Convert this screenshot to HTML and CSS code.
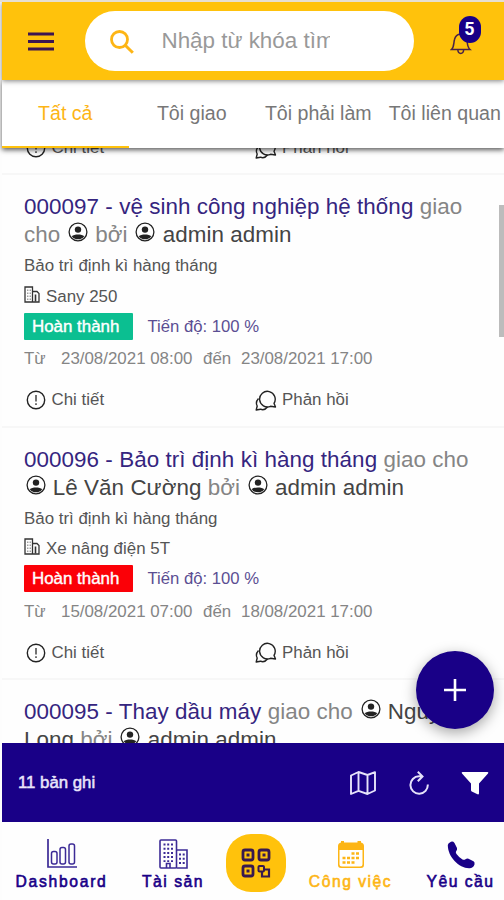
FILE: index.html
```html
<!DOCTYPE html>
<html lang="vi">
<head>
<meta charset="utf-8">
<title>Công việc</title>
<link rel="stylesheet" href="styles.css">
</head>
<body>
<svg class="defs" width="0" height="0">
  <symbol id="user" viewBox="0 0 20 20"><circle cx="10" cy="10" r="8.9" fill="none" stroke="#222" stroke-width="1.3"/><circle cx="10" cy="7.6" r="3.2" fill="#222"/><path d="M3.8 14.2C6 11.8 14 11.8 16.2 14.2C13.8 18.4 6.2 18.4 3.8 14.2Z" fill="#222"/></symbol>
  <symbol id="info" viewBox="0 0 20 20"><circle cx="10" cy="10" r="8.7" fill="none" stroke="#222" stroke-width="1.4"/><path d="M10 5v6.500M10 13.200v1.800" stroke="#444" stroke-width="1.500"/></symbol>
  <symbol id="chat" viewBox="0 0 22 21"><g fill="none" stroke="#222" stroke-width="1.4" stroke-linejoin="round"><path d="M19 13.300A7.800 7.800 0 1 0 15.500 16.300L20.500 17Z"/><path d="M3.500 8.500C1.200 11 .800 13.500 2.200 16L1.200 20L5.500 19.200C8 20.300 10.500 19.500 12.500 17"/></g></symbol>
  <symbol id="asset" viewBox="0 0 16 17"><path d="M1 16V1h7.5v15zM8.5 5.500h4.500l2 2V16H1" fill="none" stroke="#333" stroke-width="1.300"/><path d="M3.800 3.500v11M6.200 3.500v11" stroke="#777" stroke-width="1" stroke-dasharray="1.500 1.500"/><path d="M11.500 8.500v7" stroke="#333" stroke-width="1.600"/></symbol>
</svg>
<div class="app">
  <header class="header">
    <svg class="menu" viewBox="0 0 26 20"><path d="M0 2h26M0 9.5h26M0 17h26" stroke="#3d1550" stroke-width="3"/></svg>
    <div class="search">
      <svg class="lens" viewBox="0 0 24 24"><circle cx="9.500" cy="9.500" r="8" fill="none" stroke="#fdb515" stroke-width="2.800"/><path d="M15 15l7.800 7.800" stroke="#fdb515" stroke-width="3"/></svg>
      <span class="placeholder">Nhập từ khóa tìm</span>
    </div>
    <div class="bell">
      <svg viewBox="0 0 22 26"><path d="M1.500 20.500C4.200 18 3.500 14 4.500 10.500C5.300 7 7.800 5.200 10.500 5.200S16 7 16.800 10.500C17.600 14 17 18 20 20.500ZM7.800 20.800C8.200 25.700 13.300 25.700 13.700 20.800" fill="none" stroke="#4a2247" stroke-width="1.500"/></svg>
      <span class="count">5</span>
    </div>
  </header>
  <nav class="tabs">
    <span class="tab active">Tất cả</span>
    <span class="tab">Tôi giao</span>
    <span class="tab">Tôi phải làm</span>
    <span class="tab">Tôi liên quan</span>
  </nav>
  <main class="list">
    <article class="item cut">
      <div class="actions"><span class="action"><svg class="i-info"><use href="#info"/></svg>Chi tiết</span><span class="action"><svg class="i-chat"><use href="#chat"/></svg>Phản hồi</span></div>
    </article>
    <article class="item">
      <h2 class="title"><b>000097 - vệ sinh công nghiệp hệ thống</b> giao<br>cho <svg class="i-user"><use href="#user"/></svg> bởi <svg class="i-user"><use href="#user"/></svg> <i>admin admin</i></h2>
      <p class="desc">Bảo trì định kì hàng tháng</p>
      <p class="asset"><svg class="i-asset"><use href="#asset"/></svg>Sany 250</p>
      <div class="status"><span class="badge green">Hoàn thành</span><span class="progress">Tiến độ: 100 %</span></div>
      <p class="dates"><span class="from">Từ</span><span class="when">23/08/2021 08:00</span><span class="to">đến</span><span>23/08/2021 17:00</span></p>
      <div class="actions"><span class="action"><svg class="i-info"><use href="#info"/></svg>Chi tiết</span><span class="action"><svg class="i-chat"><use href="#chat"/></svg>Phản hồi</span></div>
    </article>
    <article class="item">
      <h2 class="title"><b>000096 - Bảo trì định kì hàng tháng</b> giao cho<br><svg class="i-user"><use href="#user"/></svg> <i>Lê Văn Cường</i> bởi <svg class="i-user"><use href="#user"/></svg> <i>admin admin</i></h2>
      <p class="desc">Bảo trì định kì hàng tháng</p>
      <p class="asset"><svg class="i-asset"><use href="#asset"/></svg>Xe nâng điện 5T</p>
      <div class="status"><span class="badge red">Hoàn thành</span><span class="progress">Tiến độ: 100 %</span></div>
      <p class="dates"><span class="from">Từ</span><span class="when">15/08/2021 07:00</span><span class="to">đến</span><span>18/08/2021 17:00</span></p>
      <div class="actions"><span class="action"><svg class="i-info"><use href="#info"/></svg>Chi tiết</span><span class="action"><svg class="i-chat"><use href="#chat"/></svg>Phản hồi</span></div>
    </article>
    <article class="item">
      <h2 class="title"><b>000095 - Thay dầu máy</b> giao cho <svg class="i-user"><use href="#user"/></svg> <i>Nguyễn</i><br><i>Long</i> bởi <svg class="i-user"><use href="#user"/></svg> <i>admin admin</i></h2>
    </article>
    <div class="thumb"></div>
  </main>
  <div class="fab"><svg viewBox="0 0 22 22"><path d="M11 0v22M0 11h22" stroke="#fff" stroke-width="2.600"/></svg></div>
  <section class="bar">
    <span class="total">11 bản ghi</span>
    <svg class="i-map" viewBox="0 0 26 24"><path d="M1 4.500L8.500 1L17.500 4L25 1.200V19.500L17.500 23L8.500 19.800L1 23ZM8.500 1V19.800M17.500 4V23" fill="none" stroke="#e6e2fa" stroke-width="1.900" stroke-linejoin="round"/></svg>
    <svg class="i-reload" viewBox="0 0 20 24"><path d="M18.800 13.500A8.700 8.700 0 1 1 10 5.300H13.300M8.800 .800L13.500 5.400L8.800 10.200" fill="none" stroke="#e6e2fa" stroke-width="2"/></svg>
    <svg class="i-filter" viewBox="0 0 28 24"><path d="M1.500 1H26.500Q28 1 27 2.500L18 12.500V22.500Q17.500 24 16 23L10.800 20.500Q10 20 10 19V12.500L1 2.500Q0 1 1.500 1Z" fill="#fff"/></svg>
  </section>
  <footer class="nav">
    <div class="nav-item n1"><svg width="30" height="30" viewBox="0 0 30 30"><g fill="none" stroke="#3c2b96" stroke-width="1.500"><path d="M1 0V28H30" stroke-width="1.700"/><rect x="4.500" y="12.500" width="5.500" height="12.500" rx="2"/><rect x="13" y="8.500" width="5.500" height="16.500" rx="2"/><rect x="22" y="5" width="5.500" height="20" rx="2"/></g></svg><span>Dashboard</span></div>
    <div class="nav-item n2"><svg width="29" height="30" viewBox="0 0 29 30"><g fill="none" stroke="#3c2b96" stroke-width="1.600"><rect x="1" y="1" width="16.500" height="28" rx="1"/><path d="M17.500 11H28V29H17.500M7.500 29V24.500H11V29"/><path d="M5.500 4.500V23M9.200 4.500V23M13 4.500V23M21 14.500V27M24.700 14.500V27" stroke-dasharray="2 2.200" stroke-width="2"/></g></svg><span>Tài sản</span></div>
    <div class="qr"><svg width="30" height="30" viewBox="0 0 30 30"><g fill="none" stroke="#38194f" stroke-width="2.800"><rect x="2" y="2" width="10" height="10" rx="2"/><rect x="18" y="2" width="10" height="10" rx="2"/><rect x="2" y="18" width="10" height="10" rx="2"/><rect x="17.500" y="18" width="5.500" height="5.500" rx="1" stroke-width="2"/><path d="M23 21.500H28V28.500H21V23.500" stroke-width="2.200"/></g><path d="M5.500 5.500h3v3h-3zM21.500 5.500h3v3h-3zM5.500 21.500h3v3h-3z" fill="#38194f"/></svg></div>
    <div class="nav-item n3"><svg width="28" height="28" viewBox="0 0 28 28"><path d="M4 1.500V0H7V1.500H20.500V0H24V1.500Q27 2 27 5V24Q27 27 24 27H4Q1 27 1 24V5Q1 2 4 1.500ZM2.500 9V23Q2.500 25.500 5 25.500H23Q25.500 25.500 25.500 23V9Z" fill="#fdb515" fill-rule="evenodd"/><path d="M5.500 21.500H17.500M5.500 17H22M14.500 12.500H22" stroke="#fdb515" stroke-width="2.400" stroke-dasharray="3 1.500"/></svg><span>Công việc</span></div>
    <div class="nav-item n4"><svg width="28" height="28" viewBox="0 0 28 28"><path d="M.8 4Q1 2 4 .8Q6 0 7.500 2L10 7Q10.500 8.800 9 10.500Q8.500 11.500 9.500 13Q12 16.500 15.500 18.500Q17 19.200 18.500 18.300Q20 17.200 21.500 17.800L26.500 20.200Q28 21.200 27.500 23.500Q26 27.500 22 27.200C12 27 .8 16 .8 4Z" fill="#190087"/></svg><span>Yêu cầu</span></div>
  </footer>
</div>
</body>
</html>
```
FILE: styles.css
```css
* { box-sizing: border-box; }
body { margin: 0; background: #fdfdfd; font-family: "Liberation Sans", Arial, sans-serif; color: #555; }
p, h2 { margin: 0; }
svg { display: block; flex: none; }
.defs { position: absolute; }
.app { width: 504px; height: 900px; padding-left: 2px; border-top: 2px solid #e6dfd3; display: flex; flex-direction: column; overflow: hidden; position: relative; white-space: nowrap; }
.header { height: 78px; flex: none; background: #ffc20c; display: flex; align-items: center; box-shadow: 0 1px 5px rgba(0,0,0,.5); position: relative; z-index: 2; }
.menu { width: 26px; height: 20px; margin-left: 26px; margin-top: 1px; }
.search { width: 329px; height: 60px; margin-left: 30.5px; border-radius: 30px; background: #fff; display: flex; align-items: center; }
.lens { width: 24px; height: 24px; margin-left: 25.5px; margin-top: 2px; }
.placeholder { width: 168px; margin-left: 27.5px; overflow: hidden; font-size: 22.4px; line-height: 34px; color: #999; }
.bell { position: relative; width: 34px; height: 40px; margin-left: 36px; }
.bell svg { width: 22px; height: 26px; margin-top: 8px; }
.count { position: absolute; left: 9px; top: -5px; width: 22px; height: 27px; border-radius: 11px; background: #190087; color: #fff; font: bold 18px/25px Roboto, sans-serif; text-align: center; }
.tabs { height: 68px; flex: none; display: flex; background: #fff; box-shadow: 0 2px 5px rgba(0,0,0,.65); position: relative; z-index: 1; font-size: 19.6px; line-height: 67px; color: #777; }
.tab { width: 126.5px; text-align: center; flex: none; }
.tab.active { color: #fdb515; border-bottom: 2px solid #ffc20c; }
.list { height: 595px; flex: none; overflow: hidden; position: relative; background: #fefefe; }
.item { height: 252.3px; padding: 18px 22px 0; border-top: 2px solid #f7f7f7; }
.item.cut { height: 25.4px; padding-top: 0; border: 0; display: flow-root; }
.item.cut .actions { margin-top: -14px; }
.title { font-size: 22.4px; line-height: 28px; height: 56px; font-weight: 400; color: #858585; letter-spacing: .06px; }
.title b { font-weight: 400; color: #35257f; }
.title i { font-style: normal; color: #444; }
.i-user { width: 20px; height: 20px; display: inline-block; vertical-align: 0; margin: 0 1px 0 1.5px; }
.desc, .asset { font-size: 16.9px; line-height: 31px; height: 31px; }
.desc { padding-top: 1px; }
.asset { display: flex; align-items: center; gap: 6px; padding-top: 1px; }
.i-asset { width: 16px; height: 17px; margin-top: -4px; }
.status { display: flex; align-items: center; height: 28px; margin-top: 1px; }
.badge { width: 109px; height: 27px; border-radius: 1px; color: #fff; font-size: 16.9px; line-height: 27px; padding-left: 8px; -webkit-text-stroke: .4px #fff; }
.green { background: #0bbf91; }
.red { background: #fb0007; }
.progress { margin-left: 14.5px; font-size: 16.7px; color: #5b4e93; padding-top: 1px; }
.dates { display: flex; height: 36px; line-height: 37px; font-size: 16.9px; color: #858585; }
.from { width: 37px; }
.when { width: 142px; }
.to { width: 38px; }
.actions { display: flex; height: 28px; margin-top: 10px; }
.action { width: 231px; flex: none; display: flex; align-items: center; font-size: 16.9px; color: #555; }
.action + .action { width: 120px; }
.i-info { width: 20px; height: 20px; margin: 0 6px 0 1.5px; }
.i-chat { width: 22px; height: 21px; margin-right: 5px; }
.thumb { position: absolute; right: 0; top: 57px; width: 5px; height: 132px; background: #bcbcbc; }
.fab { position: absolute; z-index: 3; left: 416px; top: 649px; width: 78px; height: 78px; border-radius: 50%; background: #190087; display: flex; align-items: center; justify-content: center; box-shadow: 0 4px 14px rgba(0,0,0,.35); }
.fab svg { width: 22px; height: 22px; }
.bar { height: 79px; flex: none; background: #190087; display: flex; align-items: center; color: #e9e5fa; }
.total { font-size: 16.8px; -webkit-text-stroke: .5px #e9e5fa; margin-left: 16px; width: 332px; padding-top: 1px; }
.i-map { width: 26px; height: 24px; }
.i-reload { width: 20px; height: 24px; margin-left: 33px; }
.i-filter { width: 28px; height: 24px; margin-left: 32px; }
.nav { flex: 1; display: flex; background: #fefefe; color: #190087; }
.nav-item { flex: none; display: flex; flex-direction: column; align-items: center; justify-content: flex-end; height: 70px; font-size: 15.7px; line-height: 20px; letter-spacing: 1.5px; -webkit-text-stroke: .6px currentColor; }
.nav-item svg { margin-bottom: 3px; }
.n1 { width: 119px; letter-spacing: 1.7px; }
.n2 { width: 104px; }
.qr { flex: none; width: 60px; height: 58px; margin: 12px 0 0 1px; border-radius: 25px; background: #ffc20c; display: flex; align-items: center; justify-content: center; }
.n3 { width: 129px; color: #fdb515; }
.n4 { width: 91px; }
```
